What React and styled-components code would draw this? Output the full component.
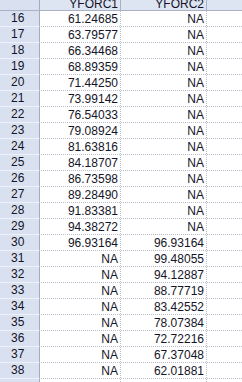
import React from "react";
import styled, { createGlobalStyle } from "styled-components";

const Global = createGlobalStyle`
  html, body { margin: 0; padding: 0; background: #ffffff; overflow: hidden; }
  body { width: 242px; height: 382px; }
`;

const Sheet = styled.div`
  width: 242px;
  height: 382px;
  overflow: hidden;
  background: #ffffff;
  font-family: "Liberation Sans", Arial, sans-serif;
  font-size: 12px;
  color: #141428;
`;

const Row = styled.div`
  display: flex;
  height: ${(p) => (p.$header ? 10 : 15)}px;
  border-bottom: 1px ${(p) => (p.$header ? "solid #a9b1c4" : "dotted #b9bdcc")};
  background: ${(p) => (p.$header ? "#dde4f2" : "#ffffff")};
`;

const RowHead = styled.div`
  width: 39px;
  flex: none;
  border-right: 1px solid #a3abbe;
  background: #d9e1f1;
  box-sizing: content-box;
  padding-left: 11px;
  line-height: 15px;
  margin-bottom: ${(p) => (p.$header ? 0 : -1)}px;
  border-bottom: ${(p) => (p.$header ? "none" : "1px solid #eef1f8")};
  width: 28px;
`;

const Cell = styled.div`
  width: ${(p) => p.$w}px;
  flex: none;
  border-right: 1px ${(p) => (p.$header ? "solid #a9b1c4" : "dotted #b9bdcc")};
  text-align: right;
  padding-right: 2px;
  box-sizing: border-box;
  line-height: ${(p) => (p.$header ? 9 : 16)}px;
  overflow: hidden;
  white-space: nowrap;
`;

const Filler = styled.div`
  flex: 1;
`;

const data = [
  [16, "61.24685", "NA"],
  [17, "63.79577", "NA"],
  [18, "66.34468", "NA"],
  [19, "68.89359", "NA"],
  [20, "71.44250", "NA"],
  [21, "73.99142", "NA"],
  [22, "76.54033", "NA"],
  [23, "79.08924", "NA"],
  [24, "81.63816", "NA"],
  [25, "84.18707", "NA"],
  [26, "86.73598", "NA"],
  [27, "89.28490", "NA"],
  [28, "91.83381", "NA"],
  [29, "94.38272", "NA"],
  [30, "96.93164", "96.93164"],
  [31, "NA", "99.48055"],
  [32, "NA", "94.12887"],
  [33, "NA", "88.77719"],
  [34, "NA", "83.42552"],
  [35, "NA", "78.07384"],
  [36, "NA", "72.72216"],
  [37, "NA", "67.37048"],
  [38, "NA", "62.01881"],
  ["", "", ""],
];

export default function App() {
  return (
    <>
      <Global />
      <Sheet>
        <Row $header>
          <RowHead $header />
          <Cell $header $w={81}>YFORC1</Cell>
          <Cell $header $w={86}>YFORC2</Cell>
          <Filler />
        </Row>
        {data.map(([n, a, b], i) => (
          <Row key={i}>
            <RowHead>{n}</RowHead>
            <Cell $w={81}>{a}</Cell>
            <Cell $w={86}>{b}</Cell>
            <Filler />
          </Row>
        ))}
      </Sheet>
    </>
  );
}
